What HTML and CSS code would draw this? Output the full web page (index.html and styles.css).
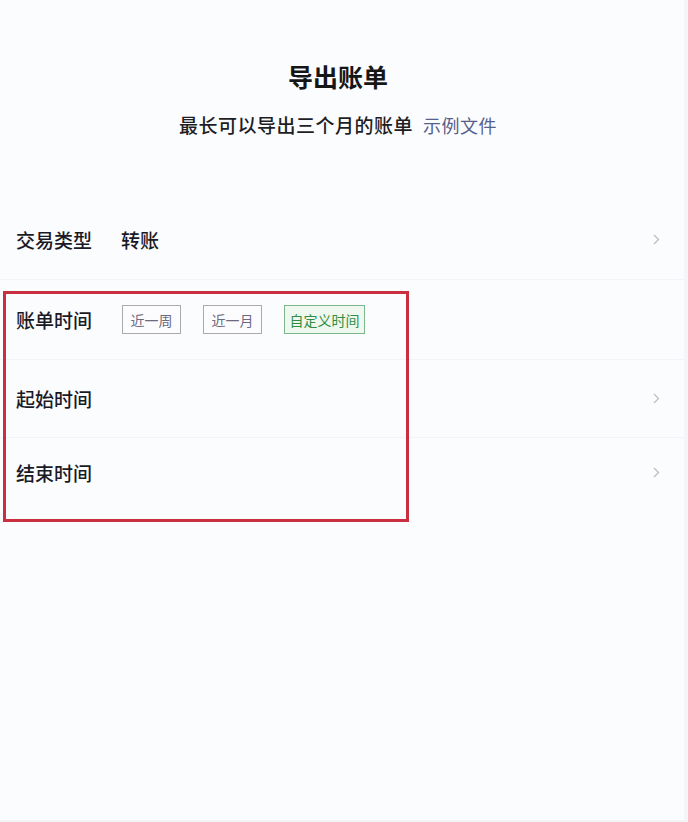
FILE: index.html
```html
<!DOCTYPE html>
<html lang="zh-CN">
<head>
    <meta charset="UTF-8">
    <meta name="viewport" content="width=device-width, initial-scale=1.0">
    <title>导出账单</title>
    <link rel="stylesheet" href="styles.css">
</head>
<body>
    <div class="page">
        <div class="header">
            <h1>导出账单</h1>
            <p>最长可以导出三个月的账单<a href="#" class="sample">示例文件</a></p>
        </div>

        <div class="list">
            <div class="row row-type">
                <span class="label">交易类型</span>
                <span class="value">转账</span>
                <svg class="chevron" width="7" height="11" viewBox="0 0 7 11"><polyline points="1,1 5.5,5.5 1,10" fill="none" stroke="#b9bcc4" stroke-width="1.2"/></svg>
            </div>

            <div class="time-group">
                <div class="row row-range">
                    <span class="label">账单时间</span>
                    <div class="options">
                        <button class="opt">近一周</button>
                        <button class="opt">近一月</button>
                        <button class="opt opt-active">自定义时间</button>
                    </div>
                </div>
                <div class="row row-start">
                    <span class="label">起始时间</span>
                    <svg class="chevron" width="7" height="11" viewBox="0 0 7 11"><polyline points="1,1 5.5,5.5 1,10" fill="none" stroke="#b9bcc4" stroke-width="1.2"/></svg>
                </div>
                <div class="row row-end">
                    <span class="label">结束时间</span>
                    <svg class="chevron" width="7" height="11" viewBox="0 0 7 11"><polyline points="1,1 5.5,5.5 1,10" fill="none" stroke="#b9bcc4" stroke-width="1.2"/></svg>
                </div>
                <!-- annotation box drawn over the time rows -->
                <div class="highlight"></div>
            </div>
        </div>
    </div>
</body>
</html>
```

FILE: styles.css
```css
* {
    margin: 0;
    padding: 0;
    box-sizing: border-box;
    font-family: 'Noto Sans CJK SC', 'Noto Sans', sans-serif;
}

body {
    background: #fbfcfe;
    width: 688px;
    height: 822px;
    overflow: hidden;
}

.page {
    height: 822px;
    border-right: 4px solid #f3f5f8;
    border-bottom: 2px solid #f1f3f6;
}

.header {
    text-align: center;
    padding-top: 59px;
    padding-right: 8px;
    height: 200px;
}

.header h1 {
    font-size: 25px;
    line-height: 34px;
    font-weight: 700;
    color: #161616;
}

.header p {
    margin-top: 19px;
    font-size: 19px;
    line-height: 26px;
    letter-spacing: 0.5px;
    font-weight: 500;
    color: #1e1e24;
}

.sample {
    margin-left: 10px;
    color: #55608c;
    font-size: 18px;
    font-weight: 400;
    text-decoration: none;
}

.row {
    display: flex;
    align-items: center;
    padding: 0 24px 0 16px;
    border-bottom: 1px solid #f3f4f8;
}

.row-type { height: 80px; }
.row-range { height: 80px; }
.row-start { height: 78px; }
.row-end { height: 68px; border-bottom: none; }

.label {
    width: 105px;
    flex-shrink: 0;
    font-size: 19px;
    font-weight: 500;
    color: #1a1a26;
}

.value {
    font-size: 19px;
    font-weight: 500;
    color: #1a1a26;
}

.chevron {
    margin-left: auto;
}

.options {
    display: flex;
    gap: 22px;
    padding-left: 1px;
}

.opt {
    height: 29px;
    width: 59px;
    border: 1px solid #a9aab0;
    background: #fcfcfe;
    color: #6d6a80;
    font-size: 14px;
    cursor: pointer;
}

.opt-active {
    width: 81px;
    border-color: #7fb58a;
    background: #eef8ef;
    color: #2f8d45;
}

.time-group {
    position: relative;
}

.highlight {
    position: absolute;
    left: 3px;
    top: 11px;
    width: 406px;
    height: 231px;
    border: 3px solid #c92f3e;
    pointer-events: none;
}
```
